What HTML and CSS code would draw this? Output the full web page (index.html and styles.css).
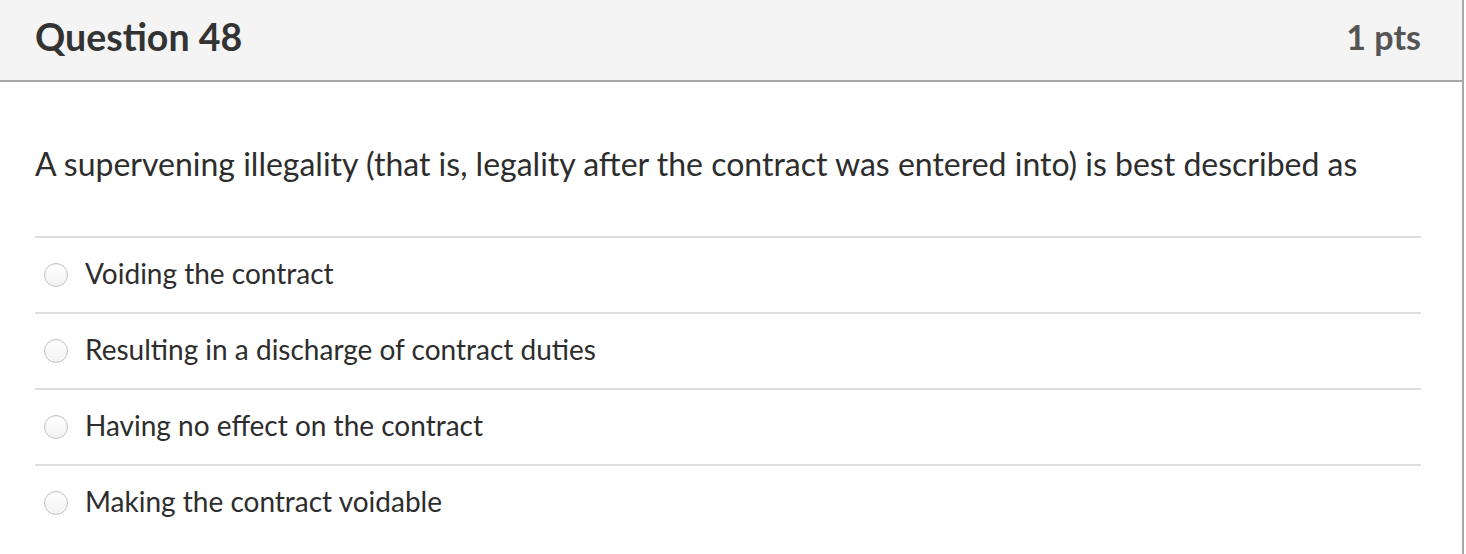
FILE: index.html
```html
<!DOCTYPE html>
<html>
<head>
<meta charset="utf-8">
<link rel="stylesheet" href="styles.css">
</head>
<body>
<div class="question">
  <div class="header">
    <div class="title">Question 48</div>
    <div class="points">1 pts</div>
  </div>
  <div class="content">
    <div class="text">A supervening illegality (that is, legality after the contract was entered into) is best described as</div>
    <div class="answers">
      <label class="answer"><span class="radio"></span><span class="label">Voiding the contract</span></label>
      <label class="answer"><span class="radio"></span><span class="label">Resulting in a discharge of contract duties</span></label>
      <label class="answer"><span class="radio"></span><span class="label">Having no effect on the contract</span></label>
      <label class="answer"><span class="radio"></span><span class="label">Making the contract voidable</span></label>
    </div>
  </div>
</div>
</body>
</html>
```

FILE: styles.css
```css
html, body {
  margin: 0;
  padding: 0;
  background: #ffffff;
}
body {
  font-family: Lato, "Open Sans", sans-serif;
  color: #2d2d2d;
  width: 1466px;
  height: 554px;
  overflow: hidden;
}
.question {
  width: 1462px;
  border-right: 2px solid #a8a8a8;
  height: 554px;
}
.header {
  height: 80px;
  background: #f4f4f4;
  border-bottom: 2px solid #a8a8a8;
  display: flex;
  align-items: center;
  justify-content: space-between;
  padding: 0 41px 0 35px;
  box-sizing: content-box;
}
.title {
  font-size: 37.5px;
  font-weight: 700;
  color: #333333;
  margin-top: -7px;
}
.points {
  font-size: 34px;
  font-weight: 700;
  color: #555555;
  margin-top: -7px;
}
.content {
  padding: 0 41px 0 35px;
}
.text {
  font-size: 32px;
  line-height: 36px;
  padding-top: 64px;
  padding-bottom: 54px;
  color: #2d2d2d;
}
.answers {
  display: flex;
  flex-direction: column;
}
.answer {
  display: flex;
  align-items: center;
  height: 74px;
  border-top: 2px solid #dedede;
}
.radio {
  width: 22px;
  height: 22px;
  border-radius: 50%;
  border: 1px solid #c4c4c4;
  background: linear-gradient(#ffffff, #f2f2f2);
  margin-left: 9px;
  margin-right: 17px;
  box-shadow: inset 0 1px 1px rgba(0,0,0,0.05);
  flex-shrink: 0;
}
.label {
  font-size: 28px;
  color: #2d2d2d;
  margin-top: -5px;
}
```
